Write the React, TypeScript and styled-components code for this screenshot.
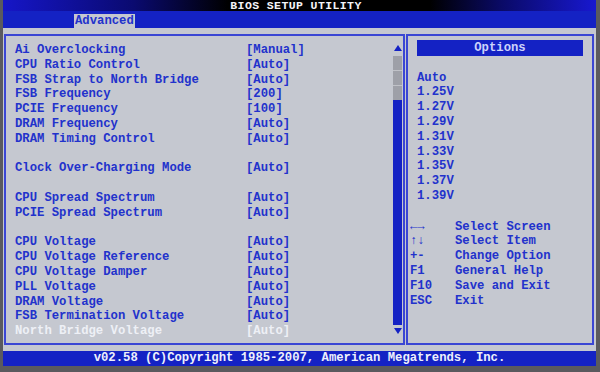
import * as React from 'react'
import styled, { createGlobalStyle } from 'styled-components'

const GlobalStyle = createGlobalStyle`
  html, body {
    margin: 0;
    padding: 0;
    background: #5a5a5e;
  }
`

const blue = '#1422c4'
const ink = '#2232cc'
const panel = '#c5c8d0'
const line = '#3a46d4'

const Screen = styled.div`
  width: 600px;
  height: 372px;
  box-sizing: border-box;
  padding: 0 4px 6px 3px;
  display: flex;
  flex-direction: column;
  background: #5a5a5e;
  font-family: 'Liberation Mono', 'DejaVu Sans Mono', monospace;
  font-weight: bold;
  font-size: 12.25px;
`

const TitleBar = styled.div`
  height: 11px;
  display: flex;
  justify-content: center;
  padding-right: 7px;
  line-height: 11px;
  font-size: 11.5px;
  letter-spacing: 0.4px;
  color: #f4f4f8;
  background: linear-gradient(90deg, #1616c8 0%, #0a0a70 22%, #000 38%, #000 72%, #0a0a66 84%, #1818d0 100%);
  white-space: pre;
`

const TabBar = styled.div`
  height: 17px;
  display: flex;
  align-items: flex-end;
  padding-left: 71px;
  background: ${blue};
`

const Tab = styled.div`
  height: 14px;
  line-height: 14px;
  padding: 0 1px;
  background: ${panel};
  color: ${ink};
`

const Main = styled.div`
  flex: 1;
  display: flex;
  gap: 1px;
  padding: 6px 2px 6px 1px;
  background: ${panel};
`

const Box = styled.div<{ $width?: number }>`
  ${(p) => (p.$width ? `width: ${p.$width}px;` : 'flex: 1;')}
  box-sizing: border-box;
  border: 2px solid ${line};
  display: flex;
`

const SettingsList = styled.div`
  flex: 1;
  padding: 7px 0 0 9px;
`

const Row = styled.div<{ $active?: boolean }>`
  display: grid;
  grid-template-columns: 231px auto;
  height: 14.8px;
  line-height: 14.8px;
  white-space: pre;
  color: ${(p) => (p.$active ? '#eef0f6' : ink)};
`

const ScrollBar = styled.div`
  width: 9px;
  margin-right: 1px;
  padding-top: 9px;
  display: flex;
  flex-direction: column;
  align-items: center;
`

const Arrow = styled.div<{ $down?: boolean }>`
  width: 0;
  height: 0;
  border-left: 4px solid transparent;
  border-right: 4px solid transparent;
  ${(p) => (p.$down ? `border-top: 6px solid ${blue};` : `border-bottom: 6px solid ${blue};`)}
`

const Track = styled.div`
  margin-top: 5px;
  width: 9px;
  height: 44px;
  background: repeating-linear-gradient(180deg, #9ea0a8 0 14px, #c0c2c8 14px 15px);
`

const Thumb = styled.div`
  width: 9px;
  height: 225px;
  margin-bottom: 3px;
  background: ${blue};
`

const Side = styled.div`
  flex: 1;
  padding: 4px 9px 0;
  display: flex;
  flex-direction: column;
`

const OptionsHeader = styled.div`
  height: 16px;
  line-height: 16px;
  text-align: center;
  background: ${blue};
  color: #cdd2fa;
`

const OptionList = styled.div`
  margin-top: 14.6px;
`

const Line = styled.div`
  height: 14.8px;
  line-height: 14.8px;
  color: ${ink};
  white-space: pre;
`

const HelpList = styled.div`
  margin: 15.8px 0 0 -7px;
`

const HelpRow = styled.div`
  display: grid;
  grid-template-columns: 45px auto;
  height: 14.8px;
  line-height: 14.8px;
  color: ${ink};
  white-space: pre;
`

const Footer = styled.div`
  height: 15px;
  line-height: 15px;
  text-align: center;
  background: ${blue};
  color: #eef0fc;
  white-space: pre;
`

type Setting = { label: string; value: string } | null

const settings: Setting[] = [
  { label: 'Ai Overclocking', value: '[Manual]' },
  { label: 'CPU Ratio Control', value: '[Auto]' },
  { label: 'FSB Strap to North Bridge', value: '[Auto]' },
  { label: 'FSB Frequency', value: '[200]' },
  { label: 'PCIE Frequency', value: '[100]' },
  { label: 'DRAM Frequency', value: '[Auto]' },
  { label: 'DRAM Timing Control', value: '[Auto]' },
  null,
  { label: 'Clock Over-Charging Mode', value: '[Auto]' },
  null,
  { label: 'CPU Spread Spectrum', value: '[Auto]' },
  { label: 'PCIE Spread Spectrum', value: '[Auto]' },
  null,
  { label: 'CPU Voltage', value: '[Auto]' },
  { label: 'CPU Voltage Reference', value: '[Auto]' },
  { label: 'CPU Voltage Damper', value: '[Auto]' },
  { label: 'PLL Voltage', value: '[Auto]' },
  { label: 'DRAM Voltage', value: '[Auto]' },
  { label: 'FSB Termination Voltage', value: '[Auto]' },
  { label: 'North Bridge Voltage', value: '[Auto]' },
]

const options = ['Auto', '1.25V', '1.27V', '1.29V', '1.31V', '1.33V', '1.35V', '1.37V', '1.39V']

const help = [
  ['←→', 'Select Screen'],
  ['↑↓', 'Select Item'],
  ['+-', 'Change Option'],
  ['F1', 'General Help'],
  ['F10', 'Save and Exit'],
  ['ESC', 'Exit'],
]

export default function App() {
  return (
    <>
      <GlobalStyle />
      <Screen>
        <TitleBar>BIOS SETUP UTILITY</TitleBar>
        <TabBar>
          <Tab>Advanced</Tab>
        </TabBar>
        <Main>
          <Box $width={401}>
            <SettingsList>
              {settings.map((s, i) =>
                s ? (
                  <Row key={i} $active={i === settings.length - 1}>
                    <span>{s.label}</span>
                    <span>{s.value}</span>
                  </Row>
                ) : (
                  <Row key={i} />
                )
              )}
            </SettingsList>
            <ScrollBar>
              <Arrow />
              <Track />
              <Thumb />
              <Arrow $down />
            </ScrollBar>
          </Box>
          <Box>
            <Side>
              <OptionsHeader>Options</OptionsHeader>
              <OptionList>
                {options.map((o) => (
                  <Line key={o}>{o}</Line>
                ))}
              </OptionList>
              <HelpList>
                {help.map(([key, text]) => (
                  <HelpRow key={key}>
                    <span>{key}</span>
                    <span>{text}</span>
                  </HelpRow>
                ))}
              </HelpList>
            </Side>
          </Box>
        </Main>
        <Footer>v02.58 (C)Copyright 1985-2007, American Megatrends, Inc.</Footer>
      </Screen>
    </>
  )
}
